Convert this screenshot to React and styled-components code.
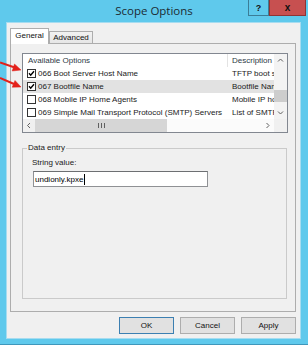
import React from "react";
import styled, { createGlobalStyle } from "styled-components";

const GlobalStyle = createGlobalStyle`
  html, body { margin: 0; padding: 0; background: #ffffff; }
  body {
    font-family: "Liberation Sans", Arial, sans-serif;
    font-size: 8px;
    color: #1a1a1a;
  }
  * { box-sizing: border-box; }
`;

const Window = styled.div`
  position: relative;
  width: 308px;
  height: 345px;
  background: #5fc9ec;
  border-bottom: 1px solid #3f97bb;
  display: flex;
  flex-direction: column;
  overflow: hidden;
`;

const TitleBar = styled.div`
  height: 22px;
  display: grid;
  grid-template-columns: 1fr auto 1fr;
`;

const Title = styled.div`
  font-family: "Open Sans", "Noto Sans", sans-serif;
  font-size: 11.5px;
  line-height: 22px;
  color: #1c2b33;
  white-space: nowrap;
`;

const Caption = styled.div`
  justify-self: end;
  align-self: start;
  display: flex;
  margin-right: 2px;
`;

const CaptionButton = styled.div`
  width: ${(p) => (p.$close ? 37 : 21)}px;
  height: 16px;
  background: ${(p) => (p.$close ? "#c75050" : "#5fc9ec")};
  border: 1px solid ${(p) => (p.$close ? "#8f3434" : "#3b7d97")};
  border-top: none;
  display: flex;
  align-items: center;
  justify-content: center;
  font-family: "Liberation Sans", Arial, sans-serif;
  font-weight: bold;
  font-size: ${(p) => (p.$close ? 10 : 9)}px;
  color: #111;
`;

const ClientArea = styled.div`
  height: 317px;
  margin: 0 7px 0 6px;
  border: 1px solid #a6dcf0;
  background: #f0f0f0;
  padding: 5px 2px 0 3px;
  display: flex;
  flex-direction: column;
`;

const TabStrip = styled.div`
  display: flex;
  align-items: flex-end;
  height: 15px;
  position: relative;
  z-index: 1;
`;

const Tab = styled.div`
  height: ${(p) => (p.$active ? 16 : 12)}px;
  width: ${(p) => p.$w}px;
  margin-bottom: ${(p) => (p.$active ? -1 : 0)}px;
  align-self: ${(p) => (p.$active ? "flex-start" : "flex-end")};
  border: 1px solid #adadad;
  border-bottom: none;
  background: ${(p) =>
    p.$active ? "#ffffff" : "linear-gradient(#f2f2f2, #e6e6e6)"};
  display: flex;
  align-items: center;
  justify-content: center;
  padding-bottom: ${(p) => (p.$active ? 2 : 0)}px;
  color: #111;
`;

const Panel = styled.div`
  height: 269px;
  margin-right: 2px;
  border: 1px solid #adadad;
  background: #f0f0f0;
  padding: 9px 10px 0 11px;
  display: flex;
  flex-direction: column;
`;

const ListView = styled.div`
  width: 266px;
  height: 80px;
  border: 1px solid #828790;
  background: #ffffff;
  display: grid;
  grid-template-columns: 1fr 13px;
  grid-template-rows: 1fr 13px;
`;

const ListBody = styled.div`
  overflow: hidden;
`;

const Row = styled.div`
  height: 13px;
  display: grid;
  grid-template-columns: 205px 1fr;
  align-items: center;
  background: ${(p) => (p.$selected ? "#e2e2e2" : "transparent")};
  white-space: nowrap;
`;

const HeaderCell = styled.div`
  height: 13px;
  line-height: 13px;
  padding-left: ${(p) => (p.$first ? 5 : 4)}px;
  border-right: ${(p) => (p.$first ? "1px solid #e3e3e3" : "none")};
  color: #2e3a45;
  overflow: hidden;
`;

const NameCell = styled.div`
  display: flex;
  align-items: center;
  gap: 2px;
  padding-left: 4px;
  overflow: hidden;
`;

const DescCell = styled.div`
  padding-left: 4px;
  overflow: hidden;
`;

const VScroll = styled.div`
  grid-row: 1;
  grid-column: 2;
  display: flex;
  flex-direction: column;
  background: #f3f3f3;
`;

const HScroll = styled.div`
  display: flex;
  background: #fbfbfb;
`;

const Corner = styled.div`
  background: #f0f0f0;
`;

const ArrowBox = styled.div`
  width: ${(p) => p.$w || 13}px;
  height: 13px;
  flex: none;
  display: flex;
  align-items: center;
  justify-content: center;
  background: ${(p) => p.$bg || "transparent"};
`;

const Track = styled.div`
  flex: 1;
`;

const VThumb = styled.div`
  margin-top: 23px;
  height: 12px;
  background: #cdcdcd;
`;

const HThumb = styled.div`
  width: 132px;
  flex: none;
  background: #d6d6d6;
  display: flex;
  align-items: center;
  justify-content: center;
  gap: 2px;
`;

const Grip = styled.span`
  width: 1px;
  height: 5px;
  background: #606060;
`;

const GroupBox = styled.fieldset`
  margin: 10px 0 0 0;
  width: 265px;
  height: 156px;
  border: 1px solid #cacaca;
  padding: 0;
  min-width: 0;
`;

const Legend = styled.legend`
  margin-left: 4px;
  padding: 0 1px;
  line-height: 10px;
  color: #1a1a1a;
`;

const GroupContent = styled.div`
  padding: 5px 0 0 9px;
  display: flex;
  flex-direction: column;
`;

const FieldLabel = styled.div`
  line-height: 10px;
  margin-bottom: 3px;
`;

const TextBox = styled.div`
  margin-left: 1px;
  width: 175px;
  height: 16px;
  border: 1px solid #8f9194;
  border-top-color: #6d6f72;
  background: #ffffff;
  display: flex;
  align-items: center;
  padding-left: 1px;
  color: #000;
`;

const Caret = styled.span`
  width: 1px;
  height: 11px;
  background: #000;
  margin-left: 1px;
`;

const Footer = styled.div`
  margin-top: 5px;
  padding-right: 2px;
  display: flex;
  justify-content: flex-end;
  gap: 6px;
`;

const Button = styled.div`
  width: 55px;
  height: 17px;
  border: 1px solid ${(p) => (p.$default ? "#3c7fb1" : "#adadad")};
  background: #e1e1e1;
  display: flex;
  align-items: center;
  justify-content: center;
  color: #111;
`;

const Overlay = styled.svg`
  position: absolute;
  left: 0;
  top: 0;
  pointer-events: none;
`;

const Chevron = ({ dir }) => {
  const pts = {
    left: "4,1 1.5,3.5 4,6",
    right: "1.5,1 4,3.5 1.5,6",
    up: "1,4.5 3.5,2 6,4.5",
    down: "1,2.5 3.5,5 6,2.5",
  }[dir];
  const vertical = dir === "up" || dir === "down";
  return (
    <svg width={vertical ? 7 : 6} height={vertical ? 7 : 7}>
      <polyline points={pts} fill="none" stroke="#606060" strokeWidth="1" />
    </svg>
  );
};

const CheckBox = ({ checked }) => (
  <svg width="9" height="9" style={{ flex: "none" }}>
    <rect x="0.5" y="0.5" width="8" height="8" fill="#fff" stroke="#333" />
    {checked && (
      <polyline
        points="2,4.3 3.7,6.2 7,2.3"
        fill="none"
        stroke="#000"
        strokeWidth="1.4"
      />
    )}
  </svg>
);

const options = [
  { name: "066 Boot Server Host Name", desc: "TFTP boot server host name", checked: true },
  { name: "067 Bootfile Name", desc: "Bootfile Name", checked: true, selected: true },
  { name: "068 Mobile IP Home Agents", desc: "Mobile IP home agents", checked: false },
  { name: "069 Simple Mail Transport Protocol (SMTP) Servers", desc: "List of SMTP servers", checked: false },
];

export default function App() {
  return (
    <>
      <GlobalStyle />
      <Window>
        <TitleBar>
          <div />
          <Title>Scope Options</Title>
          <Caption>
            <CaptionButton>?</CaptionButton>
            <CaptionButton $close>x</CaptionButton>
          </Caption>
        </TitleBar>

        <ClientArea>
          <TabStrip>
            <Tab $active $w={39}>General</Tab>
            <Tab $w={44}>Advanced</Tab>
          </TabStrip>

          <Panel>
            <ListView>
              <ListBody>
                <Row>
                  <HeaderCell $first>Available Options</HeaderCell>
                  <HeaderCell>Description</HeaderCell>
                </Row>
                {options.map((o) => (
                  <Row key={o.name} $selected={o.selected}>
                    <NameCell>
                      <CheckBox checked={o.checked} />
                      <span>{o.name}</span>
                    </NameCell>
                    <DescCell>{o.desc}</DescCell>
                  </Row>
                ))}
              </ListBody>
              <VScroll>
                <ArrowBox><Chevron dir="up" /></ArrowBox>
                <Track>
                  <VThumb />
                </Track>
                <ArrowBox><Chevron dir="down" /></ArrowBox>
              </VScroll>
              <HScroll>
                <ArrowBox $w={12} $bg="#f0f0f0"><Chevron dir="left" /></ArrowBox>
                <HThumb>
                  <Grip />
                  <Grip />
                  <Grip />
                </HThumb>
                <Track />
                <ArrowBox $w={13}><Chevron dir="right" /></ArrowBox>
              </HScroll>
              <Corner />
            </ListView>

            <GroupBox>
              <Legend>Data entry</Legend>
              <GroupContent>
                <FieldLabel>String value:</FieldLabel>
                <TextBox>
                  undionly.kpxe
                  <Caret />
                </TextBox>
              </GroupContent>
            </GroupBox>
          </Panel>

          <Footer>
            <Button $default>OK</Button>
            <Button>Cancel</Button>
            <Button>Apply</Button>
          </Footer>
        </ClientArea>

        {/* red annotation arrows drawn over the dialog */}
        <Overlay width="30" height="100" viewBox="0 0 30 100">
          <g stroke="#e3211b" strokeWidth="2" fill="#e3211b">
            <line x1="0" y1="62.5" x2="14" y2="67.3" />
            <polygon points="21,70 14.5,64 12.2,71" strokeWidth="0.5" />
            <line x1="0" y1="78" x2="14" y2="84" />
            <polygon points="21,87 15,80.5 12.2,87.2" strokeWidth="0.5" />
          </g>
        </Overlay>
      </Window>
    </>
  );
}
